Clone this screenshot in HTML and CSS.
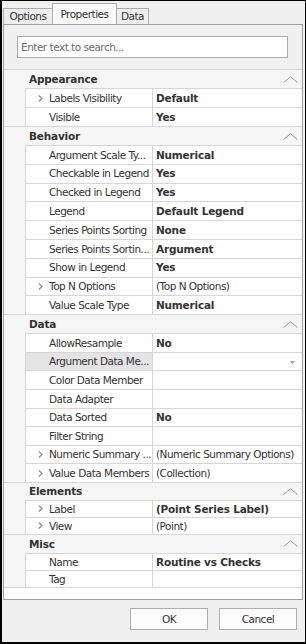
FILE: index.html
```html
<!DOCTYPE html>
<html lang="en">
<head>
    <meta charset="UTF-8">
    <title>Properties</title>
    <link rel="stylesheet" href="styles.css">
</head>
<body>
<div class="dlg">
    <div class="tabs">
        <div class="tab opt">Options</div>
        <div class="tab prop">Properties</div>
        <div class="tab dat">Data</div>
    </div>
    <div class="panel">
        <div class="search">Enter text to search...</div>
        <div class="grid">
            <div class="cat appearance">
                <div class="head">Appearance<svg class="up" viewBox="0 0 15 7"><path d="M0.5 6.5L7.5 0.8L14.5 6.5"/></svg></div>
                <div class="row"><div class="name exp"><svg class="arr" viewBox="0 0 5 7"><path d="M0.8 0.5L4 3.5L0.8 6.5"/></svg>Labels Visibility</div><div class="val b">Default</div></div>
                <div class="row"><div class="name">Visible</div><div class="val b">Yes</div></div>
            </div>
            <div class="cat behavior">
                <div class="head">Behavior<svg class="up" viewBox="0 0 15 7"><path d="M0.5 6.5L7.5 0.8L14.5 6.5"/></svg></div>
                <div class="row"><div class="name">Argument Scale Ty...</div><div class="val b">Numerical</div></div>
                <div class="row"><div class="name">Checkable in Legend</div><div class="val b">Yes</div></div>
                <div class="row"><div class="name">Checked in Legend</div><div class="val b">Yes</div></div>
                <div class="row"><div class="name">Legend</div><div class="val b">Default Legend</div></div>
                <div class="row"><div class="name">Series Points Sorting</div><div class="val b">None</div></div>
                <div class="row"><div class="name">Series Points Sortin...</div><div class="val b">Argument</div></div>
                <div class="row"><div class="name">Show in Legend</div><div class="val b">Yes</div></div>
                <div class="row"><div class="name exp"><svg class="arr" viewBox="0 0 5 7"><path d="M0.8 0.5L4 3.5L0.8 6.5"/></svg>Top N Options</div><div class="val">(Top N Options)</div></div>
                <div class="row"><div class="name">Value Scale Type</div><div class="val b">Numerical</div></div>
            </div>
            <div class="cat data">
                <div class="head">Data<svg class="up" viewBox="0 0 15 7"><path d="M0.5 6.5L7.5 0.8L14.5 6.5"/></svg></div>
                <div class="row"><div class="name">AllowResample</div><div class="val b">No</div></div>
                <div class="row sel"><div class="name">Argument Data Me...</div><div class="val"><svg class="drop" viewBox="0 0 5 3"><path d="M0 0H5L2.5 3Z"/></svg></div></div>
                <div class="row"><div class="name">Color Data Member</div><div class="val"></div></div>
                <div class="row"><div class="name">Data Adapter</div><div class="val"></div></div>
                <div class="row"><div class="name">Data Sorted</div><div class="val b">No</div></div>
                <div class="row"><div class="name">Filter String</div><div class="val"></div></div>
                <div class="row"><div class="name exp"><svg class="arr" viewBox="0 0 5 7"><path d="M0.8 0.5L4 3.5L0.8 6.5"/></svg>Numeric Summary ...</div><div class="val">(Numeric Summary Options)</div></div>
                <div class="row"><div class="name exp"><svg class="arr" viewBox="0 0 5 7"><path d="M0.8 0.5L4 3.5L0.8 6.5"/></svg>Value Data Members</div><div class="val">(Collection)</div></div>
            </div>
            <div class="cat elements">
                <div class="head">Elements<svg class="up" viewBox="0 0 15 7"><path d="M0.5 6.5L7.5 0.8L14.5 6.5"/></svg></div>
                <div class="row"><div class="name exp"><svg class="arr" viewBox="0 0 5 7"><path d="M0.8 0.5L4 3.5L0.8 6.5"/></svg>Label</div><div class="val b">(Point Series Label)</div></div>
                <div class="row"><div class="name exp"><svg class="arr" viewBox="0 0 5 7"><path d="M0.8 0.5L4 3.5L0.8 6.5"/></svg>View</div><div class="val">(Point)</div></div>
            </div>
            <div class="cat misc">
                <div class="head">Misc<svg class="up" viewBox="0 0 15 7"><path d="M0.5 6.5L7.5 0.8L14.5 6.5"/></svg></div>
                <div class="row"><div class="name">Name</div><div class="val b">Routine vs Checks</div></div>
                <div class="row"><div class="name">Tag</div><div class="val"></div></div>
            </div>
        </div>
    </div>
    <div class="btns">
        <div class="btn">OK</div>
        <div class="btn">Cancel</div>
    </div>
</div>
</body>
</html>
```
FILE: styles.css
```css
*{ margin:0; padding:0; box-sizing:border-box;}
body{ font:10.5px/1 "DejaVu Sans", sans-serif; color:#333; background:#fff; letter-spacing:-0.5px;}

.dlg{ width:306px; height:644px; border:1px solid #000; border-left-width:2px; border-bottom-width:2px;
    background:#f0f0f0; padding:2px 2px 0 1px; display:flex; flex-direction:column;}

/* tabs */
.tabs{ display:flex; align-items:flex-end; height:21px;}
.tab{ height:16px; border:1px solid #acacac; border-bottom:0; margin-left:-1px; background:#eeeeee;
    display:flex; align-items:center; justify-content:center;}
.tab.opt{ width:50px; margin-left:0;}
.tab.prop{ width:65px; height:21px; background:#f9f9f9; padding-top:1px;}
.tab.dat{ width:33px;}

/* panel */
.panel{ height:576px; border:1px solid #a0a0a0; display:flex; flex-direction:column; padding-top:11px;}
.search{ height:22px; margin:0 14px 0 13px; border:1px solid #abadb3; background:#fff; color:#6d6d6d;
    padding-left:3px; display:flex; align-items:center;}
.grid{ flex:1; margin-top:11px; background:#fff;}

/* property grid */
.cat{ --hh:18px; --rh:19px; border-top:1px solid #d6d6d6; background:#f6f6f6;}
.cat.behavior{ --rh:18.8px;}
.cat.data{ --rh:18.6px;}
.cat.elements{ --hh:17px; --rh:17px;}
.cat.misc{ --rh:17px; border-bottom:1px solid #d6d6d6;}
.head{ height:var(--hh); display:flex; align-items:center; justify-content:space-between;
    padding:0 4px 0 25px; font-weight:bold; letter-spacing:-0.2px;}
.up{ width:15px; height:7px; fill:none; stroke:#9a9a9a; stroke-width:1;}

.row{ height:var(--rh); display:flex; margin-left:21px; border-top:1px solid #d6d6d6;
    border-left:1px solid #d6d6d6; background:#fff;}
.name{ width:127px; border-right:1px solid #d6d6d6; padding-left:23px; display:flex; align-items:center;
    white-space:nowrap; overflow:hidden;}
.name.exp{ padding-left:12px;}
.arr{ width:5px; height:7px; margin-right:6px; fill:none; stroke:#8a8a8a; stroke-width:1.2;}
.val{ flex:1; padding-left:3px; display:flex; align-items:center; white-space:nowrap;}
.val.b{ font-weight:bold; letter-spacing:-0.2px;}
.sel .name{ background:#e4e4e4;}
.drop{ width:5px; height:3px; margin:1px 7px 0 auto; fill:#9a9a9a;}

/* buttons */
.btns{ display:flex; justify-content:flex-end; gap:11px; padding:8px 6px 0 0;}
.btn{ width:78px; height:22px; border:1px solid #adadad; background:#fdfdfd;
    display:flex; align-items:center; justify-content:center;}
```
